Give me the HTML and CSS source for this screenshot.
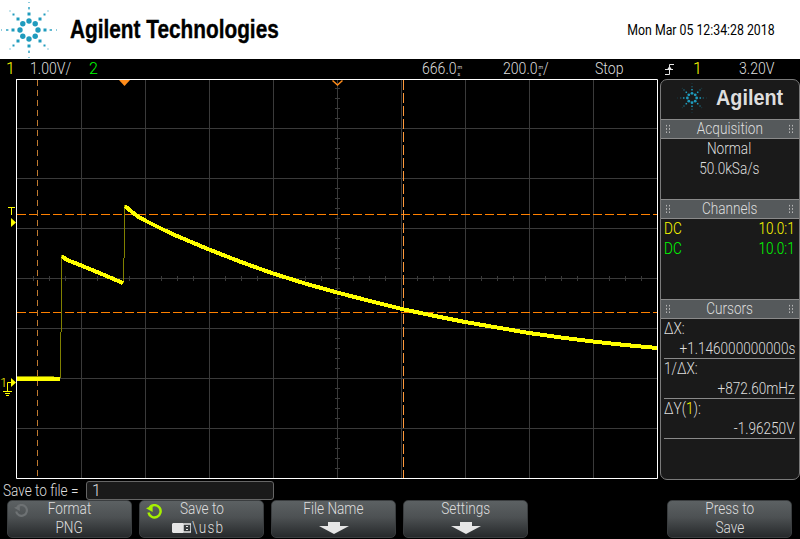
FILE: index.html
```html
<!DOCTYPE html>
<html lang="en">
<head>
    <meta charset="UTF-8">
    <meta name="viewport" content="width=device-width, initial-scale=1.0">
    <title>Oscilloscope Capture</title>
    <link rel="stylesheet" href="styles.css">
</head>
<body>

    <svg class="defs" width="0" height="0">
        <symbol id="star" viewBox="-29 -29 58 58">
            <g fill="#1f9bbd">
                <circle cx="0" cy="-9" r="2.7"/><circle cx="6.2" cy="-6.2" r="2.7"/>
                <circle cx="9" cy="0" r="2.7"/><circle cx="6.2" cy="6.2" r="2.7"/>
                <circle cx="0" cy="9" r="2.7"/><circle cx="-6.2" cy="6.2" r="2.7"/>
                <circle cx="-9" cy="0" r="2.7"/><circle cx="-6.2" cy="-6.2" r="2.7"/>
                <rect x="-1.5" y="-17.5" width="3" height="3"/><rect x="-1.5" y="14.5" width="3" height="3"/>
                <rect x="14.5" y="-1.5" width="3" height="3"/><rect x="-17.5" y="-1.5" width="3" height="3"/>
                <rect x="9.5" y="-12.5" width="3" height="3"/><rect x="-12.5" y="-12.5" width="3" height="3"/>
                <rect x="9.5" y="9.5" width="3" height="3"/><rect x="-12.5" y="9.5" width="3" height="3"/>
                <rect x="-.7" y="-23" width="1.4" height="2.4"/><rect x="-.7" y="20.6" width="1.4" height="2.4"/>
                <rect x="20.6" y="-.7" width="2.4" height="1.4"/><rect x="-23" y="-.7" width="2.4" height="1.4"/>
                <rect x="14.5" y="-16.5" width="2" height="2"/><rect x="-16.5" y="-16.5" width="2" height="2"/>
                <rect x="14.5" y="14.5" width="2" height="2"/><rect x="-16.5" y="14.5" width="2" height="2"/>
                <rect x="-.5" y="-28" width="1" height="1"/><rect x="-.5" y="27" width="1" height="1"/>
                <rect x="27" y="-.5" width="1" height="1"/><rect x="-28" y="-.5" width="1" height="1"/>
                <rect x="18.5" y="-19.5" width="1" height="1"/><rect x="-19.5" y="-19.5" width="1" height="1"/>
                <rect x="18.5" y="18.5" width="1" height="1"/><rect x="-19.5" y="18.5" width="1" height="1"/>
            </g>
        </symbol>
        <symbol id="spin" viewBox="0 0 18 18">
            <path d="M4 3.5A6.5 6.5 0 1 1 2.600 9" fill="none" stroke="currentColor" stroke-width="2.6"/>
            <path d="M0 4.500L7 1.500L7 8.500Z" fill="currentColor"/>
        </symbol>
    </svg>

    <header class="brand">
        <svg class="brand-logo" width="58" height="58"><use href="#star"/></svg>
        <h1 class="brand-name"><span class="tx">Agilent Technologies</span></h1>
        <span class="brand-date"><span class="tx-r">Mon Mar 05 12:34:28 2018</span></span>
    </header>

    <div class="status">
        <span class="yellow">1</span>
        <span class="tx">1.00V/</span>
        <span class="green">2</span>
        <span class="tx">666.0<i class="unit"><b>m</b><b>s</b></i></span>
        <span class="tx">200.0<i class="unit"><b>m</b><b>s</b></i>/</span>
        <span class="tx">Stop</span>
        <svg width="9" height="11" viewBox="0 0 9 11">
            <path d="M0 10.500H4.500V.5H9M0 5.500H8" fill="none" stroke="#e6e6e6"/>
            <path d="M2 5.500L4.500 2L7 5.500Z" fill="#e6e6e6"/>
        </svg>
        <span class="yellow">1</span>
        <span class="tx">3.20V</span>
    </div>

    <main class="scope">
        <svg class="screen" width="660" height="400" viewBox="0 79 660 400">
            <!-- graticule -->
            <path class="grid" d="M81.500 79V479M145.500 79V479M209.500 79V479M273.500 79V479M337.500 79V479M401.500 79V479M465.500 79V479M529.500 79V479M593.500 79V479
                M17 128.500H657M17 178.500H657M17 228.500H657M17 278.500H657M17 328.500H657M17 378.500H657M17 428.500H657"/>
            <path class="ticks-v" d="M337.500 88V478"/>
            <path class="ticks-h" d="M33 278.500H657"/>
            <path class="frame" d="M16.500 79.500V478.500H657.500V79.500H16"/>

            <!-- cursors -->
            <path class="cursor-y" d="M17 214.500H657M17 312.500H657"/>
            <path class="cursor-x" d="M403.500 80V478"/>
            <path class="cursor-ref" d="M37.500 80V478"/>
            <path class="mark" d="M119 80H130L124.500 86Z"/>
            <path class="mark-open" d="M332.500 80.500L337.500 85L342.500 80.500"/>

            <!-- trace -->
            <path class="edge" d="M60.500 378V332M61.500 332V255M123.500 283V258M124.500 258V205"/>
            <path class="flat" d="M17 376.500H54"/>
            <path class="trace" d="M17 378.500H60"/>
            <path class="trace" d="M62 256L66 259.500L80 265L97 272L123 283"/>
            <path class="trace" d="M125 206L132 212L138 216.500L145 220.500L155 225.500L165 230.500L177 236L209 249.500L241 262L273 273.500L305 283.500L337 292.500L370 301L404 309.500L435 316L465 322L497 327.500L529 333L561 337.500L593 341.500L625 345L657 348"/>

            <!-- ground and trigger markers -->
            <path class="marker-line" d="M8 207.500H15M11.500 207V215M7.500 391V382.500H11M3 391.500H12M5 393.500H10M6 395.500H9"/>
            <path class="marker" d="M11 218L16 222.500L11 227ZM11 378L16 382.500L11 387Z"/>
            <text class="marker-num" x="0" y="387">1</text>
        </svg>

        <aside class="panel">
            <div class="panel-logo">
                <svg width="30" height="30"><use href="#star"/></svg>
                <span class="tx">Agilent</span>
            </div>

            <h2 class="panel-head"><span class="tx-c">Acquisition</span></h2>
            <div class="panel-body body-acq">
                <p><span class="tx-c">Normal</span></p>
                <p><span class="tx-c">50.0kSa/s</span></p>
            </div>

            <h2 class="panel-head"><span class="tx-c">Channels</span></h2>
            <div class="panel-body body-chan">
                <p class="chan yellow"><span class="tx">DC</span><span class="tx-r">10.0:1</span></p>
                <p class="chan green"><span class="tx">DC</span><span class="tx-r">10.0:1</span></p>
            </div>

            <h2 class="panel-head"><span class="tx-c">Cursors</span></h2>
            <div class="panel-body">
                <div class="reading"><p><span class="tx">ΔX:</span></p><p class="val"><span class="tx-r">+1.146000000000s</span></p></div>
                <div class="reading"><p><span class="tx">1/ΔX:</span></p><p class="val"><span class="tx-r">+872.60mHz</span></p></div>
                <div class="reading"><p><span class="tx">ΔY(<span class="yellow">1</span>):</span></p><p class="val"><span class="tx-r">-1.96250V</span></p></div>
            </div>
        </aside>
    </main>

    <div class="save-row">
        <label class="save-label"><span class="tx">Save to file =</span></label>
        <div class="save-input">1</div>
    </div>

    <div class="keys">
        <div class="key">
            <svg class="key-spin dim" width="15" height="15"><use href="#spin"/></svg>
            <span class="tx-c">Format</span><span class="tx-c">PNG</span>
        </div>
        <div class="key">
            <svg class="key-spin lit" width="17" height="17"><use href="#spin"/></svg>
            <span class="tx-c">Save to</span>
            <span class="usb">
                <svg width="19" height="10" viewBox="0 0 19 10">
                    <path d="M1 0H11V10H1L0 9V1Z" fill="#e6e6e6"/>
                    <path d="M11 1H19V9H11Z" fill="none" stroke="#e6e6e6" stroke-width="1.500"/>
                    <path d="M14 3H16V4H14ZM14 6H16V7H14Z" fill="#e6e6e6"/>
                </svg>
                <span class="tx usb-text">\usb</span>
            </span>
        </div>
        <div class="key">
            <span class="tx-c">File Name</span>
            <svg class="key-arrow" width="30" height="12" viewBox="0 0 30 12"><path d="M9 0H21V4H30L15 12L0 4H9Z"/></svg>
        </div>
        <div class="key">
            <span class="tx-c">Settings</span>
            <svg class="key-arrow" width="30" height="12" viewBox="0 0 30 12"><path d="M9 0H21V4H30L15 12L0 4H9Z"/></svg>
        </div>
        <div class="key key-last">
            <span class="tx-c">Press to</span><span class="tx-c">Save</span>
        </div>
    </div>

</body>
</html>
```

FILE: styles.css
```css
* {
    box-sizing: border-box;
}
html, body {
    margin: 0;
    padding: 0;
}
body {
    width: 800px;
    height: 539px;
    overflow: hidden;
    background-color: #000;
    color: #dedede;
    font-family: Roboto, "Liberation Sans", sans-serif;
    font-weight: 300;
    font-size: 16px;
}
p, h1, h2 {
    margin: 0;
    font-weight: inherit;
    font-size: inherit;
}
svg {
    display: block;
}
.defs {
    position: absolute;
}
.yellow {
    color: #ffff00;
}
.green {
    color: #00ff00;
}

/* the scope font is tall and narrow */
.tx, .tx-c, .tx-r {
    display: inline-block;
    white-space: nowrap;
    transform: scaleX(.85);
    transform-origin: left center;
}
.tx-c {
    transform-origin: center center;
}
.tx-r {
    transform-origin: right center;
}

/* top white strip */
.brand {
    height: 59px;
    background-color: #fff;
    color: #000;
    display: flex;
    align-items: center;
}
.brand-name {
    margin-left: 12px;
    font-family: "Liberation Sans", sans-serif;
    font-size: 26px;
    font-weight: bold;
    -webkit-text-stroke: .4px #000;
}
.brand-name .tx {
    transform: scaleX(.8);
}
.brand-date {
    margin-left: auto;
    margin-right: 25px;
    font-size: 15px;
    font-weight: 400;
}
.brand-date .tx-r {
    transform: scaleX(.82);
}

/* status line */
.status {
    height: 20px;
    display: grid;
    grid-template-columns: 24px 59px 333px 81px 92px 70px 28px 46px 61px;
    align-items: center;
    line-height: 20px;
    padding-left: 6px;
}
.status .tx {
    transform: scaleX(.88);
}
.unit {
    display: inline-flex;
    flex-direction: column;
    vertical-align: middle;
    font-style: normal;
    font-size: 6px;
    line-height: 7px;
    margin-left: 1px;
}
.unit b {
    font-weight: 400;
}

/* scope screen and side panel */
.scope {
    height: 400px;
    display: flex;
}
.grid {
    stroke: #3a3a3a;
    fill: none;
}
.ticks-v, .ticks-h {
    stroke: #3a3a3a;
    stroke-width: 5;
    fill: none;
}
.ticks-v {
    stroke-dasharray: 1 9;
}
.ticks-h {
    stroke-dasharray: 1 15;
}
.frame {
    stroke: #fff;
    fill: none;
}
.cursor-y {
    stroke: #ff8000;
    stroke-dasharray: 9 3;
    fill: none;
}
.cursor-x {
    stroke: #ff9a3c;
    stroke-dasharray: 10 3;
    fill: none;
}
.cursor-ref {
    stroke: #c07a30;
    stroke-dasharray: 6 4;
    fill: none;
}
.mark {
    fill: #ff8c1a;
}
.mark-open {
    stroke: #ff8c1a;
    stroke-width: 1.500;
    fill: none;
}
.trace {
    stroke: #ffff00;
    stroke-width: 4;
    fill: none;
    shape-rendering: crispEdges;
}
.flat {
    stroke: #8c8c00;
    fill: none;
}
.edge {
    stroke: #808000;
    fill: none;
}
.marker-line {
    stroke: #ffff00;
    fill: none;
}
.marker {
    fill: #ffff00;
}
.marker-num {
    fill: #ffff00;
    font-size: 13px;
}

.panel {
    width: 140px;
    height: 401px;
    background-color: #1a1a1a;
    border: 1px solid #7a7a7a;
    border-radius: 7px;
}
.panel-logo {
    height: 39px;
    display: flex;
    align-items: center;
    gap: 9px;
    padding: 0 0 3px 16px;
    font-family: "Liberation Sans", sans-serif;
    font-size: 22px;
    font-weight: bold;
}
.panel-logo .tx {
    transform: scaleX(.9);
}
.panel-head {
    position: relative;
    height: 20px;
    background-color: #55595b;
    border-top: 1px solid #8a8a8a;
    border-bottom: 1px solid #8a8a8a;
    text-align: center;
    line-height: 18px;
}
.panel-head::before, .panel-head::after {
    content: "";
    position: absolute;
    top: 4px;
    width: 6px;
    height: 10px;
    background-image: radial-gradient(circle, #b5b5b5 .8px, transparent 1px);
    background-size: 3px 3.300px;
}
.panel-head::before {
    left: 4px;
}
.panel-head::after {
    right: 5px;
}
.panel-body {
    padding: 0 4px 0 3px;
    line-height: 20px;
}
.body-acq {
    height: 60px;
    text-align: center;
}
.body-chan {
    height: 80px;
}
.chan {
    display: flex;
    justify-content: space-between;
}
.reading {
    height: 40px;
    border-bottom: 1px solid #8a8a8a;
}
.val {
    display: flex;
    justify-content: flex-end;
}
.val .tx-r {
    flex: none;
}

/* bottom softkeys */
.save-row {
    height: 21px;
    padding: 1px 0 0 3px;
    display: flex;
    align-items: center;
}
.save-label {
    width: 83px;
    flex: none;
}
.save-input {
    width: 188px;
    height: 19px;
    padding-left: 5px;
    line-height: 18px;
    background-color: #1a1a1a;
    border: 1px solid #666;
    border-radius: 3px;
}
.keys {
    display: flex;
    gap: 7px;
    padding-left: 7px;
}
.key {
    position: relative;
    width: 125px;
    height: 38px;
    display: flex;
    flex-direction: column;
    align-items: center;
    justify-content: space-between;
    padding: 0 0 1px;
    line-height: 16px;
    background: linear-gradient(#5c6163 0%, #4d5153 45%, #26292b 100%);
    border: 1px solid #3a3d3f;
    border-radius: 5px;
}
.key-last {
    margin-left: 132px;
}
.key-spin {
    position: absolute;
    left: 6px;
    top: 3px;
}
.dim {
    color: #6e7274;
}
.lit {
    color: #a6f000;
}
.usb {
    display: flex;
    align-items: center;
    gap: 1px;
}
.usb-text {
    letter-spacing: 1.500px;
}
.key-arrow {
    fill: #e6e6e6;
    margin-bottom: 2px;
}
```
